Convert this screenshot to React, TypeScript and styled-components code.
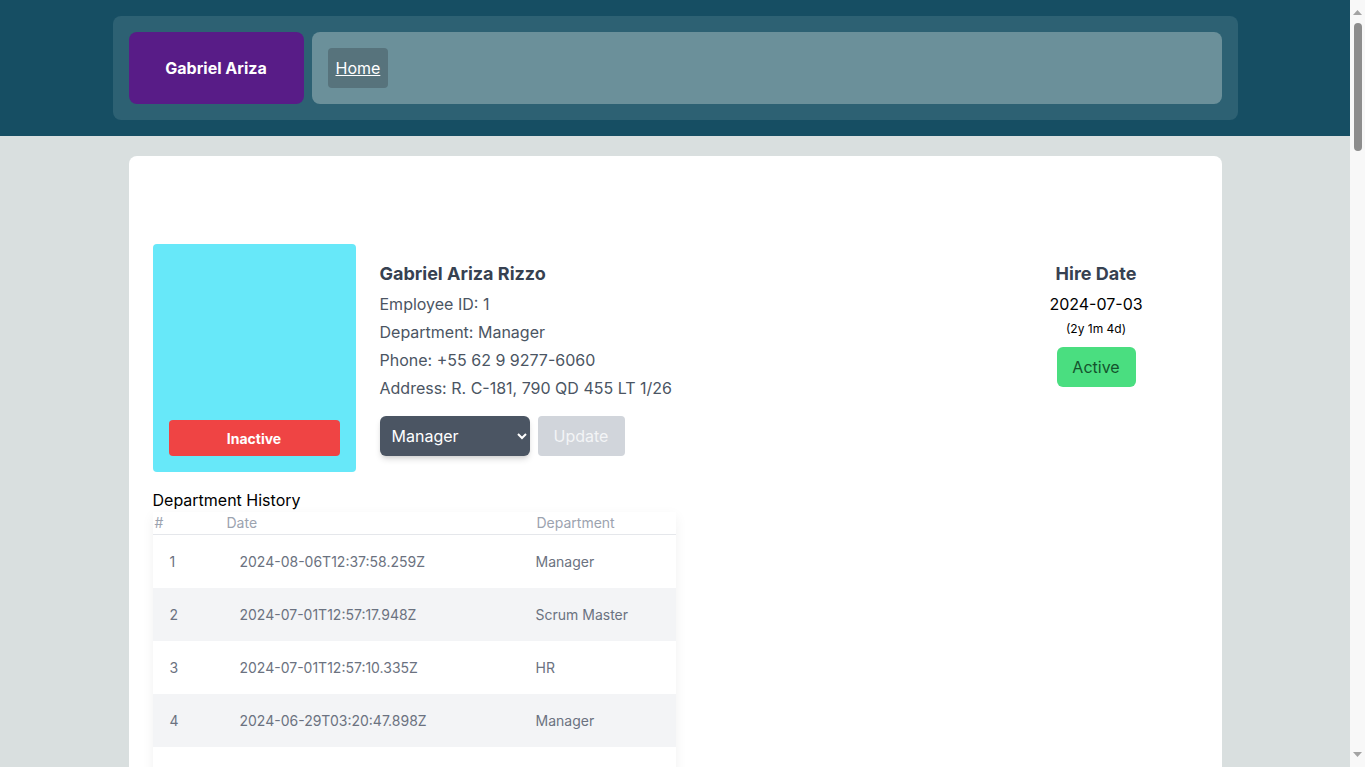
import React from "react";
import styled, { createGlobalStyle } from "styled-components";

const GlobalStyle = createGlobalStyle`
  html, body { margin: 0; padding: 0; height: 100%; overflow: hidden; }
  body {
    background: #d9dfdf;
    font-family: Inter, "Noto Sans", "Liberation Sans", sans-serif;
    color: #000;
  }
  * { box-sizing: border-box; }
`;

const Frame = styled.div`
  display: flex;
  height: 100vh;
  overflow: hidden;
`;

const Page = styled.div`
  flex: 1;
  min-width: 0;
  overflow: hidden;
  background: #d9dfdf;
`;

const ScrollTrack = styled.div`
  width: 15px;
  flex-shrink: 0;
  background: #f8f8f8;
  display: flex;
  flex-direction: column;
  align-items: center;
  padding: 10px 0;
`;

const ScrollThumb = styled.div`
  width: 8px;
  height: 128px;
  margin-top: 8px;
  border-radius: 4px;
  background: #8d8d8d;
`;

const ArrowSlot = styled.div<{ $bottom?: boolean }>`
  display: flex;
  ${(p) => (p.$bottom ? "margin-top: auto;" : "")}
`;

const Header = styled.header`
  background: #164e63;
  padding: 16px 0;
`;

const HeaderInner = styled.div`
  width: 1125px;
  margin: 0 auto;
  background: #2d6173;
  border-radius: 8px;
  padding: 16px;
  display: flex;
  gap: 8px;
`;

const Brand = styled.div`
  width: 175px;
  height: 72px;
  background: #581c87;
  border-radius: 8px;
  display: flex;
  align-items: center;
  justify-content: center;
  color: #fff;
  font-weight: 700;
  font-size: 16px;
`;

const Nav = styled.nav`
  flex: 1;
  background: #6b909a;
  border-radius: 8px;
  padding: 16px;
  display: flex;
  align-items: flex-start;
`;

const NavLink = styled.a`
  display: inline-block;
  background: #57737c;
  color: #fff;
  text-decoration: underline;
  font-size: 16px;
  line-height: 24px;
  padding: 8px;
  border-radius: 4px;
`;

const Main = styled.main`
  width: 1093px;
  margin: 20px auto 0;
`;

const Card = styled.section`
  background: #fff;
  border-radius: 8px;
  padding: 88px 24px 24px;
`;

const Top = styled.div`
  display: flex;
  align-items: flex-start;
`;

const Photo = styled.div`
  width: 203px;
  height: 228px;
  background: #67e8f9;
  border-radius: 4px;
  padding: 16px;
  display: flex;
  flex-direction: column;
  justify-content: flex-end;
  flex-shrink: 0;
`;

const StatusButton = styled.button<{ $tone: "red" | "green" }>`
  border: none;
  border-radius: ${(p) => (p.$tone === "red" ? "4px" : "6px")};
  font-family: inherit;
  cursor: pointer;
  ${(p) =>
    p.$tone === "red"
      ? `background:#ef4444;color:#fff;font-weight:700;font-size:14px;height:36px;width:100%;`
      : `background:#4ade80;color:#14532d;font-size:16px;height:40px;width:79px;`}
`;

const Info = styled.div`
  margin-left: 24px;
  align-self: center;
  display: flex;
  flex-direction: column;
  gap: 4px;
  color: #4b5563;
`;

const Name = styled.h2`
  margin: 0;
  font-size: 18px;
  line-height: 28px;
  font-weight: 700;
  color: #374151;
`;

const Line = styled.p`
  margin: 0;
  font-size: 16px;
  line-height: 24px;
`;

const Controls = styled.div`
  display: flex;
  gap: 8px;
  margin-top: 12px;
`;

const Select = styled.select`
  width: 150px;
  height: 40px;
  background: #4b5563;
  color: #fff;
  border: none;
  border-radius: 6px;
  font-family: inherit;
  font-size: 16px;
  padding: 0 8px;
  box-shadow: 0 4px 6px -1px rgba(0, 0, 0, 0.15), 0 2px 4px -2px rgba(0, 0, 0, 0.1);
`;

const UpdateButton = styled.button`
  width: 87px;
  height: 40px;
  background: #d1d5db;
  color: #f3f4f6;
  border: none;
  border-radius: 4px;
  font-family: inherit;
  font-size: 16px;
`;

const Hire = styled.div`
  margin-left: auto;
  width: 203px;
  padding-top: 16px;
  display: flex;
  flex-direction: column;
  align-items: center;
`;

const HireTitle = styled.h3`
  margin: 0;
  font-size: 18px;
  line-height: 28px;
  font-weight: 700;
  color: #374151;
`;

const HireDate = styled.div`
  margin-top: 4px;
  font-size: 16px;
  line-height: 24px;
`;

const HireSince = styled.div`
  margin-top: 5px;
  margin-bottom: 10px;
  font-size: 12px;
  line-height: 16px;
`;

const HistoryTitle = styled.h4`
  margin: 16px 0 0;
  font-size: 16px;
  line-height: 24px;
  font-weight: 400;
`;

const Table = styled.table`
  width: 523px;
  border-collapse: collapse;
  box-shadow: 0 4px 12px rgba(0, 0, 0, 0.06);
  font-size: 14px;
  table-layout: fixed;
`;

const Th = styled.th<{ $w?: number }>`
  text-align: left;
  font-weight: 400;
  color: #9ca3af;
  line-height: 20px;
  padding: 1px 2px 1px;
  border-bottom: 1px solid #e5e7eb;
  ${(p) => (p.$w ? `width:${p.$w}px;` : "")}
`;

const Tr = styled.tr`
  &:nth-child(even) { background: #f3f4f6; }
`;

const Td = styled.td<{ $pl: number }>`
  color: #6b7280;
  line-height: 21px;
  padding: 16px 0 16px ${(p) => p.$pl}px;
`;

const rows = [
  ["2024-08-06T12:37:58.259Z", "Manager"],
  ["2024-07-01T12:57:17.948Z", "Scrum Master"],
  ["2024-07-01T12:57:10.335Z", "HR"],
  ["2024-06-29T03:20:47.898Z", "Manager"],
  ["2024-06-12T09:14:22.511Z", "Developer"],
  ["2024-05-30T16:02:41.076Z", "HR"],
];

const Arrow = ({ down }: { down?: boolean }) => (
  <svg width="9" height="5" viewBox="0 0 9 5">
    <path d={down ? "M0 0 H9 L4.5 5 Z" : "M0 5 H9 L4.5 0 Z"} fill="#a3a3a3" />
  </svg>
);

export default function App() {
  return (
    <>
      <GlobalStyle />
      <Frame>
        <Page>
          <Header>
            <HeaderInner>
              <Brand>Gabriel Ariza</Brand>
              <Nav>
                <NavLink href="#">Home</NavLink>
              </Nav>
            </HeaderInner>
          </Header>
          <Main>
            <Card>
              <Top>
                <Photo>
                  <StatusButton $tone="red">Inactive</StatusButton>
                </Photo>
                <Info>
                  <Name>Gabriel Ariza Rizzo</Name>
                  <Line>Employee ID: 1</Line>
                  <Line>Department: Manager</Line>
                  <Line>Phone: +55 62 9 9277-6060</Line>
                  <Line>Address: R. C-181, 790 QD 455 LT 1/26</Line>
                  <Controls>
                    <Select defaultValue="Manager">
                      <option>Manager</option>
                      <option>Scrum Master</option>
                      <option>HR</option>
                      <option>Developer</option>
                    </Select>
                    <UpdateButton disabled>Update</UpdateButton>
                  </Controls>
                </Info>
                <Hire>
                  <HireTitle>Hire Date</HireTitle>
                  <HireDate>2024-07-03</HireDate>
                  <HireSince>(2y 1m 4d)</HireSince>
                  <StatusButton $tone="green">Active</StatusButton>
                </Hire>
              </Top>
              <HistoryTitle>Department History</HistoryTitle>
              <Table>
                <thead>
                  <tr>
                    <Th $w={72}>#</Th>
                    <Th $w={310}>Date</Th>
                    <Th>Department</Th>
                  </tr>
                </thead>
                <tbody>
                  {rows.map((r, i) => (
                    <Tr key={i}>
                      <Td $pl={17}>{i + 1}</Td>
                      <Td $pl={15}>{r[0]}</Td>
                      <Td $pl={1}>{r[1]}</Td>
                    </Tr>
                  ))}
                </tbody>
              </Table>
            </Card>
          </Main>
        </Page>
        <ScrollTrack aria-hidden="true">
          <ArrowSlot>
            <Arrow />
          </ArrowSlot>
          <ScrollThumb />
          <ArrowSlot $bottom>
            <Arrow down />
          </ArrowSlot>
        </ScrollTrack>
      </Frame>
    </>
  );
}
